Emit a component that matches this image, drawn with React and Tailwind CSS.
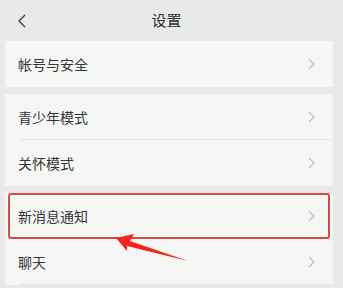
import React from "react";

const font = { fontFamily: '"Noto Sans CJK SC", "Noto Sans", sans-serif' };

function Chevron() {
  return (
    <svg width="7" height="12" viewBox="0 0 7 12" className="shrink-0">
      <path d="M1 1 L6 6 L1 11" fill="none" stroke="#b9bcba" strokeWidth="1.2" />
    </svg>
  );
}

function Row({ label, divider }) {
  return (
    <div className="relative flex h-[46px] items-center justify-between bg-[#f4f7f4] pl-[13px] pr-[18px]">
      <span className="text-[14px] text-[#353535]">{label}</span>
      <Chevron />
      {divider && <div className="absolute bottom-0 left-[15px] right-0 h-px bg-[#e4e7e5]" />}
    </div>
  );
}

export default function App() {
  return (
    <div className="relative h-[288px] w-[343px] overflow-hidden bg-[#e7eae8]" style={font}>
      {/* header */}
      <div className="relative flex h-[41px] items-center justify-center pr-[10px]">
        <svg width="10" height="14" viewBox="0 0 10 14" className="absolute left-[17px] top-[14px]">
          <path d="M8 1 L2 7 L8 13" fill="none" stroke="#3a3a3a" strokeWidth="1.3" />
        </svg>
        <span className="text-[15px] text-[#2e2e2e]">设置</span>
      </div>

      <div className="ml-[5px] mr-[10px] flex flex-col">
        <Row label="帐号与安全" />
        <div className="h-[7px]" />
        <Row label="青少年模式" divider />
        <Row label="关怀模式" />
        <div className="h-[7px]" />
        <div className="relative">
          <Row label="新消息通知" />
          <div className="absolute inset-x-[3px] inset-y-0 rounded-[3px] border-2 border-[#d84a44]" />
        </div>
        <Row label="聊天" divider />
      </div>

      {/* arrow */}
      <svg width="343" height="288" viewBox="0 0 343 288" className="pointer-events-none absolute left-0 top-0">
        <polygon points="116,238 134,234 130,241 188,261 127,246 127,251" fill="#f42420" />
      </svg>
    </div>
  );
}
